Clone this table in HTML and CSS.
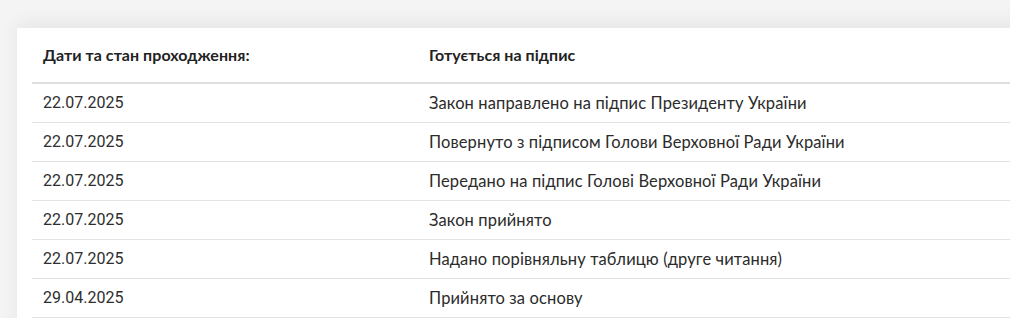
FILE: index.html
```html
<!DOCTYPE html>
<html lang="uk">
<head>
<meta charset="utf-8">
<link rel="stylesheet" href="styles.css">
</head>
<body>
<div class="page">
  <div class="card">
    <table class="stages">
      <thead>
        <tr><th class="c1">Дати та стан проходження:</th><th class="c2">Готується на підпис</th></tr>
      </thead>
      <tbody>
        <tr><td class="c1 date">22.07.2025</td><td class="c2">Закон направлено на підпис Президенту України</td></tr>
        <tr><td class="c1 date">22.07.2025</td><td class="c2">Повернуто з підписом Голови Верховної Ради України</td></tr>
        <tr><td class="c1 date">22.07.2025</td><td class="c2">Передано на підпис Голові Верховної Ради України</td></tr>
        <tr><td class="c1 date">22.07.2025</td><td class="c2">Закон прийнято</td></tr>
        <tr><td class="c1 date">22.07.2025</td><td class="c2">Надано порівняльну таблицю (друге читання)</td></tr>
        <tr><td class="c1 date">29.04.2025</td><td class="c2">Прийнято за основу</td></tr>
      </tbody>
    </table>
  </div>
</div>
</body>
</html>
```
FILE: styles.css
```css
html, body {
  margin: 0;
  padding: 0;
}
body {
  background: #f4f4f4;
  font-family: "Lato", "Noto Sans", sans-serif;
  color: #2b2b2b;
  overflow: hidden;
}
.page {
  padding: 28px 0 0 17px;
}
.card {
  background: #fff;
  width: 1100px;
  padding: 0 0 20px 15px;
  box-shadow: 0 -6px 18px rgba(0, 0, 0, 0.06);
}
.stages {
  border-collapse: collapse;
  width: 1040px;
}
.stages th {
  height: 54px;
  padding: 0;
  line-height: 20px;
  text-align: left;
  font-weight: 700;
  font-size: 16px;
  letter-spacing: 0.05px;
  color: #222;
  border-bottom: 2px solid #dedede;
  vertical-align: middle;
}
.stages td {
  height: 38px;
  padding: 0;
  line-height: 20px;
  font-size: 16.5px;
  letter-spacing: 0.12px;
  border-bottom: 1px solid #e3e3e3;
  vertical-align: middle;
}
.c1 {
  width: 386px;
  padding-left: 11px !important;
}
.stages td.date {
  font-family: "Roboto", "Liberation Sans", sans-serif;
  font-size: 16px;
  letter-spacing: 0;
  color: #2e2e2e;
}
```
